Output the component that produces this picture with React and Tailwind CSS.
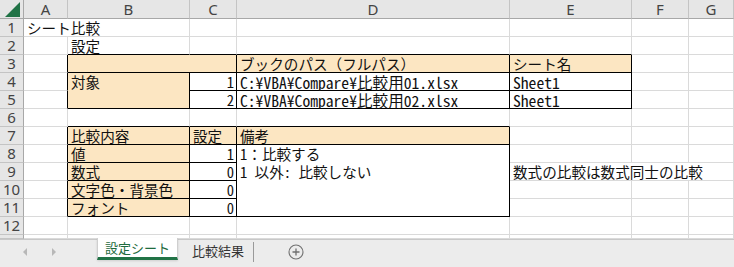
import React from 'react';

const COL_START = ['', 'col-start-2', 'col-start-3', 'col-start-4', 'col-start-5', 'col-start-6', 'col-start-7', 'col-start-8'];
const ROW_START = ['', 'row-start-2', 'row-start-3', 'row-start-4', 'row-start-5', 'row-start-6', 'row-start-7', 'row-start-8', 'row-start-9', 'row-start-10', 'row-start-11', 'row-start-12', 'row-start-13', 'row-start-14'];
const COL_SPAN = ['', '', 'col-span-2', 'col-span-3'];
const ROW_SPAN = ['', '', 'row-span-2', 'row-span-3', 'row-span-4'];
const HEAD_ROW = ['', 'row-start-2', 'row-start-3', 'row-start-4', 'row-start-5', 'row-start-6', 'row-start-7', 'row-start-8', 'row-start-9', 'row-start-10', 'row-start-11', 'row-start-12', 'row-start-13', 'row-start-14'];
const HEAD_COL = ['', 'col-start-2', 'col-start-3', 'col-start-4', 'col-start-5', 'col-start-6', 'col-start-7', 'col-start-8'];

const FILL = 'bg-[#fce6c2]';
const SANS = "font-['Noto_Sans_CJK_JP',sans-serif] text-[14.6px]";
const MONO = "font-['Noto_Sans_Mono_CJK_JP','Noto_Sans_CJK_JP',monospace] text-[14.6px]";
const MONO_WIDE = "font-['Noto_Sans_Mono_CJK_JP','Noto_Sans_CJK_JP',monospace] text-[15.6px]";

const merges = {
  '1,1': { cs: 2 },
  '3,2': { cs: 2 },
  '4,2': { rs: 2 },
  '8,4': { rs: 4 },
  '9,5': { cs: 3 },
};

const content = {
  '1,1': { t: 'シート比較' },
  '2,2': { t: '設定' },
  '3,2': { t: '', fill: true },
  '3,4': { t: 'ブックのパス（フルパス）', fill: true },
  '3,5': { t: 'シート名', fill: true },
  '4,2': { t: '対象', fill: true },
  '4,3': { t: '1', right: true, font: MONO },
  '4,4': { t: 'C:¥VBA¥Compare¥比較用01.xlsx', font: MONO_WIDE },
  '4,5': { t: 'Sheet1', font: MONO_WIDE },
  '5,3': { t: '2', right: true, font: MONO },
  '5,4': { t: 'C:¥VBA¥Compare¥比較用02.xlsx', font: MONO_WIDE },
  '5,5': { t: 'Sheet1', font: MONO_WIDE },
  '7,2': { t: '比較内容', fill: true },
  '7,3': { t: '設定', fill: true },
  '7,4': { t: '備考', fill: true },
  '8,2': { t: '値', fill: true },
  '8,3': { t: '1', right: true, font: MONO },
  '8,4': { lines: ['1：比較する', '1 以外: 比較しない'], font: MONO },
  '9,2': { t: '数式', fill: true },
  '9,3': { t: '0', right: true, font: MONO },
  '9,5': { t: '数式の比較は数式同士の比較' },
  '10,2': { t: '文字色・背景色', fill: true },
  '10,3': { t: '0', right: true, font: MONO },
  '11,2': { t: 'フォント', fill: true },
  '11,3': { t: '0', right: true, font: MONO },
};

const blackRight = new Set([
  '3,1', '4,1', '5,1', '7,1', '8,1', '9,1', '10,1', '11,1',
  '3,2', '3,4', '3,5',
  '4,2', '4,3', '4,4', '4,5', '5,3', '5,4', '5,5',
  '7,2', '7,3', '7,4', '8,2', '8,3', '8,4', '9,2', '9,3', '10,2', '10,3', '11,2', '11,3',
]);
const blackBottom = new Set([
  '2,2', '2,3', '2,4', '2,5',
  '3,2', '3,4', '3,5',
  '4,3', '4,4', '4,5',
  '4,2', '5,3', '5,4', '5,5',
  '6,2', '6,3', '6,4',
  '7,2', '7,3', '7,4',
  '8,2', '8,3', '9,2', '9,3', '10,2', '10,3',
  '11,2', '11,3', '8,4',
]);

function buildCells() {
  const covered = new Set();
  const cells = [];
  for (let r = 1; r <= 13; r++) {
    for (let c = 1; c <= 7; c++) {
      const key = `${r},${c}`;
      if (covered.has(key)) continue;
      const m = merges[key] || {};
      const cs = m.cs || 1;
      const rs = m.rs || 1;
      for (let i = 0; i < rs; i++) for (let j = 0; j < cs; j++) if (i || j) covered.add(`${r + i},${c + j}`);
      const lastKey = `${r + rs - 1},${c + cs - 1}`;
      const br = blackRight.has(key) || blackRight.has(lastKey);
      const bb = blackBottom.has(key) || blackBottom.has(lastKey);
      cells.push({ r, c, cs, rs, key, br, bb, ...(content[key] || {}) });
    }
  }
  return cells;
}

function Cell({ cell }) {
  const cls = [
    COL_START[cell.c],
    ROW_START[cell.r],
    COL_SPAN[cell.cs],
    ROW_SPAN[cell.rs],
    'border-r border-b min-w-0 overflow-visible whitespace-nowrap text-[#111]',
    cell.br ? 'border-r-black' : 'border-r-[#dadada]',
    cell.bb ? 'border-b-black' : 'border-b-[#dadada]',
    cell.fill ? FILL : 'bg-white',
    cell.font || SANS,
    cell.right ? 'text-right pr-[2px]' : 'pl-[3px]',
  ].join(' ');
  if (cell.lines) {
    return (
      <div className={cls}>
        {cell.lines.map((l, i) => (
          <div key={i} className="h-[18px] pt-[1px] leading-[16px]">{l}</div>
        ))}
      </div>
    );
  }
  return (
    <div className={cls}>
      <div className="pt-[1px] leading-[16px]">{cell.t}</div>
    </div>
  );
}

function ColHeader({ label, idx }) {
  return (
    <div
      className={`${HEAD_COL[idx]} row-start-1 bg-[#e6e6e6] border-r border-r-[#c4c4c4] border-b border-b-[#a8a8a8] flex items-center justify-center text-[15px] leading-none text-[#444] font-['Noto_Sans',sans-serif]`}
    >
      {label}
    </div>
  );
}

function RowHeader({ n }) {
  return (
    <div
      className={`col-start-1 ${HEAD_ROW[n]} bg-[#e6e6e6] border-r border-r-[#a8a8a8] border-b border-b-[#c4c4c4] flex items-center justify-center text-[15px] leading-none text-[#444] font-['Noto_Sans',sans-serif]`}
    >
      {n <= 12 ? n : ''}
    </div>
  );
}

function TabBar() {
  return (
    <div className="h-[28px] bg-[#ececec] border-t border-t-[#c8c8c8] flex items-start">
      <div className="w-[97px] h-[24px] flex items-center">
        <span className="ml-[23px] w-0 h-0 border-y-[4px] border-y-transparent border-r-[4px] border-r-[#b8b8b8]"></span>
        <span className="ml-[25px] w-0 h-0 border-y-[4px] border-y-transparent border-l-[4px] border-l-[#b8b8b8]"></span>
      </div>
      <div className="w-[81px] h-[22px] -mt-[2px] bg-white border-x border-x-[#cfcfcf] border-b-[3px] border-b-[#217346] flex items-center justify-center text-[13px] text-[#1e6b3e] font-['Noto_Sans_CJK_JP',sans-serif] shadow-[0_1px_2px_rgba(0,0,0,0.12)]">
        設定シート
      </div>
      <div className="w-[75px] h-[22px] flex items-center pl-[14px] text-[13px] text-[#333] font-['Noto_Sans_CJK_JP',sans-serif]">
        比較結果
      </div>
      <div className="h-[24px] flex items-center">
        <div className="w-px h-[20px] bg-[#9a9a9a]"></div>
      </div>
      <div className="h-[28px] flex items-center ml-[34px] -mt-[2px]">
        <svg width="16" height="16" viewBox="0 0 16 16">
          <circle cx="8" cy="8" r="7" fill="none" stroke="#707070" strokeWidth="1.1" />
          <path d="M8 4.5v7M4.5 8h7" stroke="#707070" strokeWidth="1.3" />
        </svg>
      </div>
    </div>
  );
}

export default function App() {
  const cells = buildCells();
  const cols = ['A', 'B', 'C', 'D', 'E', 'F', 'G'];
  return (
    <div className="w-[734px] h-[267px] overflow-hidden bg-white">
      <div className="grid grid-cols-[24px_44px_122px_47px_273px_122px_57px_45px] grid-rows-[19px_repeat(12,18px)_4px]">
        <div className="col-start-1 row-start-1 bg-[#e6e6e6] border-r border-r-[#a8a8a8] border-b border-b-[#a8a8a8] relative">
          <svg className="absolute right-[3px] bottom-[1px]" width="15" height="15" viewBox="0 0 15 15">
            <polygon points="15,0 15,15 0,15" fill="#217346" />
          </svg>
        </div>
        {cols.map((l, i) => (
          <ColHeader key={l} label={l} idx={i + 1} />
        ))}
        {Array.from({ length: 13 }, (_, i) => (
          <RowHeader key={i} n={i + 1} />
        ))}
        {cells.map((cell) => (
          <Cell key={cell.key} cell={cell} />
        ))}
      </div>
      <TabBar />
    </div>
  );
}
